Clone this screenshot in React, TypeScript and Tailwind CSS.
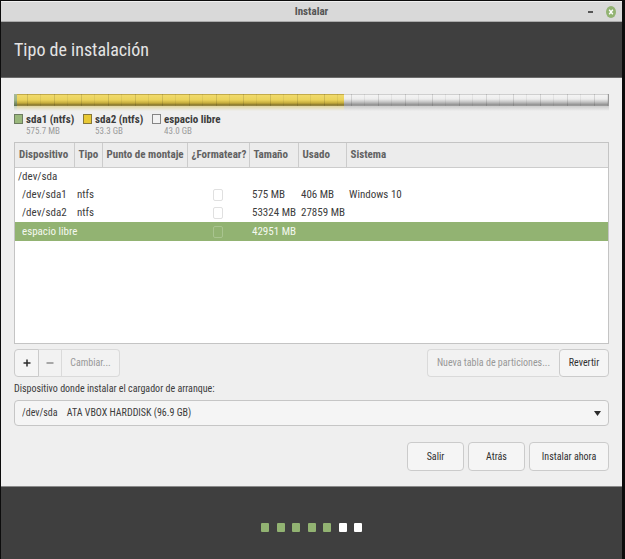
import type { ReactNode } from "react";

type Row = {
  device: string;
  type?: string;
  size?: string;
  used?: string;
  system?: string;
  root?: boolean;
  selected?: boolean;
};

const rows: Row[] = [
  { device: "/dev/sda", root: true },
  { device: "/dev/sda1", type: "ntfs", size: "575 MB", used: "406 MB", system: "Windows 10" },
  { device: "/dev/sda2", type: "ntfs", size: "53324 MB", used: "27859 MB" },
  { device: "espacio libre", size: "42951 MB", selected: true },
];

const columns = [
  { name: "Dispositivo", width: "w-[59px]" },
  { name: "Tipo", width: "w-[28px]" },
  { name: "Punto de montaje", width: "w-[85px]" },
  { name: "¿Formatear?", width: "w-[62px]" },
  { name: "Tamaño", width: "w-[49px]" },
  { name: "Usado", width: "w-[48px]" },
  { name: "Sistema", width: "" },
];

const legend = [
  { name: "sda1 (ntfs)", size: "575.7 MB", swatch: "bg-[#9ab87c] border-[#6d7c60]" },
  { name: "sda2 (ntfs)", size: "53.3 GB", swatch: "bg-[#e9c934] border-[#86773a]" },
  { name: "espacio libre", size: "43.0 GB", swatch: "bg-[#f2f2f2] border-[#858585]" },
];

const steps = [true, true, true, true, true, false, false];

function Button({ children, className = "", disabled = false, label }: { children: ReactNode; className?: string; disabled?: boolean; label?: string }) {
  return (
    <button
      type="button"
      disabled={disabled}
      aria-label={label}
      className={`flex items-center justify-center whitespace-nowrap border bg-[#f5f5f5] border-[#cbcbcb] text-[10px] text-[#303030] disabled:border-[#dadada] disabled:bg-[#f2f2f2] disabled:text-[#989898] ${className}`}
    >
      {children}
    </button>
  );
}

function DiskBar() {
  const ticks =
    "bg-[repeating-linear-gradient(90deg,transparent_0_13px,rgba(0,0,0,0.12)_13px_14px,transparent_14px_26px,rgba(0,0,0,0.06)_26px_27px)]";
  return (
    <div aria-hidden="true">
      <div className="relative flex h-3">
        <div className="w-[3px] bg-linear-to-b from-[#a9b99a] via-[#9db586] to-[#5f7050]" />
        <div className="w-[55%] bg-[linear-gradient(180deg,#c3ab49_0_1px,#f0da6c_1px,#ead25a_6px,#c5ac3c_9px,#85752c_11px,#a8985a_12px)]" />
        <div className="flex-1 bg-[linear-gradient(180deg,#cfcfcf_0_1px,#f4f4f4_1px,#ededed_5px,#c4c4c4_8px,#8e8e8e_11px,#a8a8a8_12px)]" />
        <div className={`absolute inset-0 border-r border-[#999999] ${ticks}`} />
      </div>
      <div className="flex h-[5px] opacity-60">
        <div className="w-[3px] bg-linear-to-b from-[#a9b99a] to-[#efefef]" />
        <div className="w-[55%] bg-linear-to-b from-[#d9c568] to-[#efefef]" />
        <div className="flex-1 bg-linear-to-b from-[#b4b4b4] to-[#efefef]" />
      </div>
    </div>
  );
}

export default function App() {
  return (
    <div className="flex min-h-screen flex-col bg-[#0c0c0c] pt-px pr-[3px] pl-px font-['Roboto_Condensed','Lato',sans-serif] text-[11px] leading-4 text-[#3c3c3c]">
      <header className="grid h-[21px] grid-cols-[1fr_auto_1fr] items-center border-t border-b border-t-[#f0f0f0] border-b-[#aaaaaa] bg-[#d9d9d9]">
        <span />
        <h1 className="font-bold text-[#555555]">Instalar</h1>
        <div className="flex items-center justify-end gap-[13px] pr-[6px]">
          <button type="button" aria-label="Minimizar" className="flex h-3 w-[5px] items-center">
            <span className="h-[2px] w-full bg-[#555555]" />
          </button>
          <button type="button" aria-label="Cerrar">
            <svg width="10" height="12" viewBox="0 0 10 12" className="block">
              <ellipse cx="5" cy="6" rx="5" ry="6" fill="#92b372" />
              <path d="M3.2 3.8 6.8 8.2M6.8 3.8 3.2 8.2" stroke="#fff" strokeWidth="1.4" />
            </svg>
          </button>
        </div>
      </header>

      <div className="flex h-14 items-center border-b border-[#6a6a6a] bg-[#3f3f3f] px-[13px]">
        <h2 className="text-[18px] leading-6 text-[#e4e4e4]">Tipo de instalación</h2>
      </div>

      <main className="flex flex-col bg-[#efefef] px-[13px] pt-4 pb-[15px]">
        <DiskBar />
        <ul className="mt-[2px] flex">
          {legend.map((item) => (
            <li key={item.name} className="flex w-[69px] gap-[3px]">
              <span className={`mt-px h-[10px] w-[9px] shrink-0 border ${item.swatch}`} />
              <div className="whitespace-nowrap">
                <div className="font-bold leading-[13px]">{item.name}</div>
                <div className="text-[9px] leading-[11px] text-[#9a9a9a]">{item.size}</div>
              </div>
            </li>
          ))}
        </ul>

        <div className="mt-[5px] h-[202px] overflow-hidden border border-[#c4c4c4] bg-white">
          <table className="w-full table-fixed border-collapse">
            <thead>
              <tr className="h-6 bg-[#ececec]">
                {columns.map((c) => (
                  <th key={c.name} scope="col" className={`border-r border-b border-[#cccccc] pl-1 text-left font-bold whitespace-nowrap text-[#626262] last:border-r-0 ${c.width}`}>
                    {c.name}
                  </th>
                ))}
              </tr>
            </thead>
            <tbody>
              {rows.map((r) => (
                <tr key={r.device} className={`whitespace-nowrap ${r.root || r.selected ? "h-[19px]" : "h-[18px]"} ${r.selected ? "bg-[#92b372] text-[#f4f8f0]" : ""}`}>
                  <td className={r.root ? "pl-[3px]" : "pl-[7px]"}>{r.device}</td>
                  <td className="pl-[3px]">{r.type}</td>
                  <td />
                  <td className="text-center">
                    {!r.root && (
                      <input
                        type="checkbox"
                        disabled
                        aria-label={`Formatear ${r.device}`}
                        className={`mx-auto block h-3 w-[10px] appearance-none rounded-[2px] border ${r.selected ? "border-[#a9c48f]" : "border-[#e0e0e0]"}`}
                      />
                    )}
                  </td>
                  <td className="pl-[3px]">{r.size}</td>
                  <td className="pl-[3px]">{r.used}</td>
                  <td className="pl-[3px]">{r.system}</td>
                </tr>
              ))}
            </tbody>
          </table>
        </div>

        <div className="mt-[5px] flex h-7 justify-between">
          <div className="flex">
            <Button label="Añadir" className="w-[25px] rounded-l-sm">
              <svg width="8" height="8" viewBox="0 0 8 8" stroke="#2c2c2c" strokeWidth="1.5">
                <path d="M4 .5v7M.5 4h7" />
              </svg>
            </Button>
            <Button label="Quitar" disabled className="w-[23px] border-l-0">
              <svg width="8" height="8" viewBox="0 0 8 8" stroke="#8e8e8e" strokeWidth="1.5">
                <path d="M.5 4h7" />
              </svg>
            </Button>
            <Button disabled className="w-[58px] rounded-r-sm border-l-0">Cambiar...</Button>
          </div>
          <div className="flex">
            <Button disabled className="w-[132px] rounded-l-sm border-r-0">Nueva tabla de particiones...</Button>
            <Button className="w-[50px] rounded-sm">Revertir</Button>
          </div>
        </div>

        <label htmlFor="bootloader" className="mt-1 text-[10px]">Dispositivo donde instalar el cargador de arranque:</label>
        <div className="relative mt-[3px]">
          <select id="bootloader" className="block h-[26px] w-full appearance-none rounded-sm border border-[#c6c6c6] bg-[#f5f5f5] pl-[7px] text-[10px]">
            <option>{"/dev/sda\u00a0\u00a0\u00a0\u00a0ATA VBOX HARDDISK (96.9 GB)"}</option>
          </select>
          <svg width="7" height="5" viewBox="0 0 7 5" className="pointer-events-none absolute top-[11px] right-2">
            <path d="M0 0h7L3.5 5z" fill="#2c2c2c" />
          </svg>
        </div>

        <div className="mt-4 flex h-[29px] justify-end gap-1">
          <Button className="w-[57px] rounded-sm">Salir</Button>
          <Button className="w-[57px] rounded-sm">Atrás</Button>
          <Button className="w-[80px] rounded-sm">Instalar ahora</Button>
        </div>
      </main>

      <footer className="flex grow items-start justify-center border-t border-[#8a8a8a] bg-[#3f3f3f] pt-9">
        <div className="flex w-[101px] justify-between">
          {steps.map((done, i) => (
            <span key={i} className={`h-[9px] w-2 rounded-[1px] ${done ? "bg-[#92b372]" : "bg-white"}`} />
          ))}
        </div>
      </footer>
    </div>
  );
}
